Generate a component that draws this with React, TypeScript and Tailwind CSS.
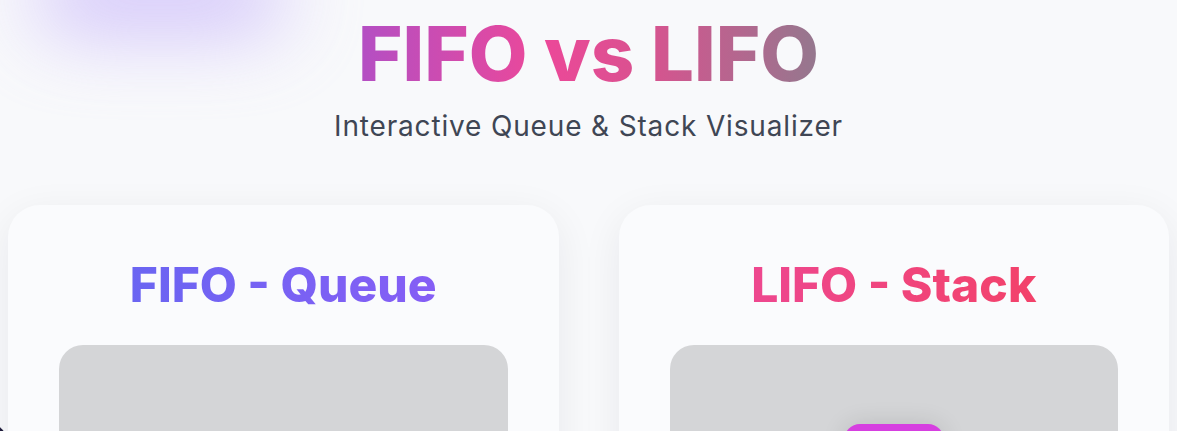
import React from 'react';

const titleGradient = {
  backgroundImage: 'linear-gradient(90deg, #b34fc4 0%, #ec4899 40%, #d9528f 62%, #94788e 100%)',
};

function Panel({ title, tone, children }: { title: string; tone: 'queue' | 'stack'; children?: React.ReactNode }) {
  return (
    <section className="bg-[#fafbfd] rounded-[32px] shadow-[0_10px_40px_rgba(15,23,42,0.07)] px-[51px] pt-[56px] pb-10">
      <h2
        className={`text-center text-[48px] leading-none font-extrabold bg-clip-text text-transparent ${
          tone === 'queue'
            ? 'bg-gradient-to-r from-[#6366f1] to-[#8b5cf6]'
            : 'bg-gradient-to-r from-[#ec4899] to-[#f43f5e]'
        }`}
      >
        {title}
      </h2>
      <div className="mt-[36px] h-[320px] rounded-3xl bg-[#d4d5d7] flex flex-col items-center">{children}</div>
    </section>
  );
}

export default function App() {
  return (
    <div className="relative min-h-screen overflow-hidden bg-[#f8f9fb] font-['Inter',sans-serif]">
      {/* soft glow in the corner */}
      <div className="absolute -top-[40px] left-[35px] w-[250px] h-[72px] rounded-full bg-[#c2aefa] opacity-75 blur-2xl" />

      <header className="relative flex flex-col items-center pt-[15px]">
        <h1 className="text-[76px] leading-none font-extrabold bg-clip-text text-transparent" style={titleGradient}>
          FIFO vs LIFO
        </h1>
        <p className="mt-[14px] text-[28px] leading-[42px] tracking-[0.03em] text-[#3f4654]">
          Interactive Queue &amp; Stack Visualizer
        </p>
      </header>

      <main className="relative grid grid-cols-2 gap-[60px] px-2 mt-[58px]">
        <Panel title="FIFO - Queue" tone="queue" />
        <Panel title="LIFO - Stack" tone="stack">
          <div className="mt-[79px] w-[100px] h-[50px] rounded-2xl bg-[#d63fe0] shadow-[0_0_24px_rgba(0,0,0,0.12)]" />
        </Panel>
      </main>

      <div className="fixed -left-[22px] -bottom-[22px] w-7 h-7 rounded-full bg-[#1e1b3a]" />
    </div>
  );
}
